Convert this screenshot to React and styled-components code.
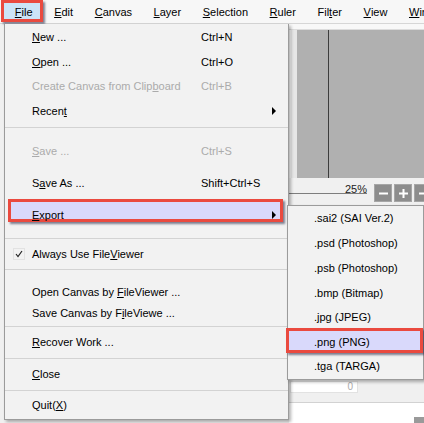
import React from "react";
import styled, { createGlobalStyle } from "styled-components";

// File menu of the paint app, with the Export submenu open

const GlobalStyle = createGlobalStyle`
  html, body { margin: 0; padding: 0; }
  body {
    background: #f0f0f0;
    font-family: "Liberation Sans", Arial, sans-serif;
    font-size: 11px;
    color: #000;
  }
`;

const Screen = styled.div`
  position: relative;
  width: 424px;
  height: 423px;
  overflow: hidden;
  background: #f0f0f0;
`;

const MenuBar = styled.div`
  display: flex;
  align-items: center;
  height: 23px;
  padding-left: 4px;
  background: #f7f7f7;
  border-bottom: 1px solid #d6d6d6;
`;

const BarItem = styled.div`
  position: relative;
  isolation: isolate;
  height: 100%;
  display: flex;
  align-items: center;
  padding: 0 10.8px;
  white-space: nowrap;
`;

const Mark = styled.span`
  position: absolute;
  z-index: -1;
  top: ${(p) => p.$top}px;
  bottom: ${(p) => p.$bottom}px;
  left: ${(p) => p.$left}px;
  right: ${(p) => p.$right}px;
  border: 3px solid #ea4a3f;
  background: ${(p) => p.$fill};
  box-shadow: 2px 2px 2px rgba(30, 30, 60, 0.55);
`;

const Key = styled.span`
  text-decoration: underline;
  text-underline-offset: 1px;
`;

const Workspace = styled.div`
  display: flex;
  height: 399px;
`;

const LeftDock = styled.div`
  flex: 0 0 289px;
  background: #f0f0f0;
`;

const RightPane = styled.div`
  flex: 1;
  min-width: 0;
  overflow: hidden;
  display: flex;
  flex-direction: column;
`;

const TopStrip = styled.div`
  height: 5px;
  background: #f8f8f8;
  border-bottom: 1px solid #dcdcdc;
`;

const CanvasArea = styled.div`
  display: flex;
  height: 148px;
`;

const CanvasEdge = styled.div`
  flex: 0 0 6px;
  background: #e6e6e6;
  border-left: 2px solid #fafafa;
`;

const CanvasGray = styled.div`
  flex: 1;
  background: #b0b0b0;
  padding-left: 31px;
`;

const Guide = styled.div`
  width: 1px;
  height: 100%;
  background: #3c3c3c;
`;

const ZoomBar = styled.div`
  display: flex;
  align-items: flex-start;
  height: 27px;
  background: #f0f0f0;
`;

const ZoomLabel = styled.div`
  flex: 0 0 78px;
  margin-top: 5px;
  height: 10px;
  line-height: 12px;
  text-align: right;
  font-size: 11px;
  color: #222;
  border-bottom: 1px solid #7d7d7d;
`;

const ZoomButtons = styled.div`
  display: flex;
  gap: 2px;
  margin: 6px 0 0 7px;
`;

const ZoomButton = styled.div`
  flex: 0 0 18px;
  height: 18px;
  box-sizing: border-box;
  display: flex;
  align-items: center;
  justify-content: center;
  background: #8d8d8d;
  border: 1px solid #a6a6a6;
`;

const Filler = styled.div`
  height: 175px;
  background: #f0f0f0;
`;

const FieldRow = styled.div`
  height: 23px;
  padding: 1px 0 0 1px;
  box-sizing: border-box;
  background: #f0f0f0;
  border-bottom: 1px solid #d2d2d2;
`;

const NumberField = styled.div`
  width: 68px;
  height: 12px;
  box-sizing: border-box;
  background: #fff;
  border: 1px solid #e2e2e2;
  color: #ababab;
  font-size: 10px;
  line-height: 10px;
  text-align: right;
  padding-right: 4px;
`;

const BottomArea = styled.div`
  flex: 1;
  display: flex;
  justify-content: flex-end;
  align-items: flex-end;
  background: #fff;
`;

const DropButton = styled.div`
  width: 10px;
  height: 6px;
  background: #9a9a9a;
`;

const Dropdown = styled.div`
  position: absolute;
  top: 24px;
  left: 4px;
  width: 285px;
  box-sizing: border-box;
  padding: 1px 0 2px;
  background: #f2f2f2;
  border: 1px solid #9b9b9b;
  border-top: none;
  box-shadow: 2px 2px 3px rgba(0, 0, 0, 0.3);
`;

const SubMenu = styled.div`
  position: absolute;
  top: 205px;
  left: 287px;
  width: 137px;
  height: 175px;
  box-sizing: border-box;
  background: #f2f2f2;
  border: 1px solid #9b9b9b;
  box-shadow: 2px 2px 3px rgba(0, 0, 0, 0.3);
`;

const Row = styled.div`
  position: relative;
  isolation: isolate;
  display: grid;
  grid-template-columns: 169px 1fr 8px;
  align-items: center;
  box-sizing: border-box;
  height: ${(p) => p.$h}px;
  padding: ${(p) => p.$shift || 0}px 8px 0 27px;
  color: ${(p) => (p.$disabled ? "#ababab" : "#000")};
  white-space: nowrap;
  line-height: 14px;
`;

const SubRow = styled.div`
  position: relative;
  isolation: isolate;
  display: flex;
  align-items: center;
  box-sizing: border-box;
  height: ${(p) => p.$h}px;
  padding: ${(p) => p.$shift || 0}px 0 0 26px;
  white-space: nowrap;
  line-height: 14px;
`;

const Check = styled.svg`
  position: absolute;
  left: 8px;
  top: 2px;
`;

const Separator = styled.div`
  height: 1px;
  margin: ${(p) => p.$before}px 0 ${(p) => p.$after}px;
  background: #d3d3d3;
`;

const menuBar = [
  ["File", 0],
  ["Edit", 0],
  ["Canvas", 0],
  ["Layer", 0],
  ["Selection", 0],
  ["Ruler", 0],
  ["Filter", 3],
  ["View", 0],
  ["Window", 0],
];

const fileMenu = [
  { label: "New ...", key: 0, shortcut: "Ctrl+N", h: 24 },
  { label: "Open ...", key: 0, shortcut: "Ctrl+O", h: 25 },
  { label: "Create Canvas from Clipboard", key: 23, shortcut: "Ctrl+B", h: 24, disabled: true },
  { label: "Recent", key: 5, sub: true, h: 25 },
  { sep: [4, 7] },
  { label: "Save ...", key: 0, shortcut: "Ctrl+S", h: 32, disabled: true },
  { label: "Save As ...", key: 1, shortcut: "Shift+Ctrl+S", h: 32 },
  { label: "Export", key: 0, sub: true, h: 23, shift: 8, marked: true },
  { sep: [16, 7] },
  { label: "Always Use FileViewer", key: 15, h: 16, checked: true },
  { sep: [7, 11] },
  { label: "Open Canvas by FileViewer ...", key: 15, h: 22 },
  { label: "Save Canvas by FileViewe ...", key: 16, h: 20 },
  { sep: [3, 3] },
  { label: "Recover Work ...", key: 0, h: 24 },
  { sep: [4, 3] },
  { label: "Close", key: 0, h: 24 },
  { sep: [4, 2] },
  { label: "Quit(X)", key: 5, h: 24 },
];

const exportMenu = [
  { label: ".sai2 (SAI Ver.2)", h: 24 },
  { label: ".psd (Photoshop)", h: 25 },
  { label: ".psb (Photoshop)", h: 25 },
  { label: ".bmp (Bitmap)", h: 25 },
  { label: ".jpg (JPEG)", h: 23 },
  { label: ".png (PNG)", h: 25, shift: 3, marked: true },
  { label: ".tga (TARGA)", h: 26 },
];

const withKey = (text, idx) => (
  <>
    {text.slice(0, idx)}
    <Key>{text[idx]}</Key>
    {text.slice(idx + 1)}
  </>
);

const Arrow = () => (
  <svg width="5" height="8" viewBox="0 0 5 8">
    <polygon points="0,0 4,4 0,8" fill="#000" />
  </svg>
);

const Minus = () => (
  <svg width="9" height="9" viewBox="0 0 9 9">
    <rect x="0" y="3.5" width="9" height="2" fill="#fff" />
  </svg>
);

const Plus = () => (
  <svg width="9" height="9" viewBox="0 0 9 9">
    <rect x="0" y="3.5" width="9" height="2" fill="#fff" />
    <rect x="3.5" y="0" width="2" height="9" fill="#fff" />
  </svg>
);

export default function App() {
  return (
    <Screen>
      <GlobalStyle />
      <MenuBar>
        {menuBar.map(([name, k], i) => (
          <BarItem key={name}>
            {i === 0 && <Mark $top={0} $bottom={1} $left={-3} $right={0} $fill="#cce4f7" />}
            {withKey(name, k)}
          </BarItem>
        ))}
      </MenuBar>

      <Workspace>
        <LeftDock />
        <RightPane>
          <TopStrip />
          <CanvasArea>
            <CanvasEdge />
            <CanvasGray>
              <Guide />
            </CanvasGray>
          </CanvasArea>
          <ZoomBar>
            <ZoomLabel>25%</ZoomLabel>
            <ZoomButtons>
              <ZoomButton>
                <Minus />
              </ZoomButton>
              <ZoomButton>
                <Plus />
              </ZoomButton>
              <ZoomButton>
                <Minus />
              </ZoomButton>
            </ZoomButtons>
          </ZoomBar>
          <Filler />
          <FieldRow>
            <NumberField>0</NumberField>
          </FieldRow>
          <BottomArea>
            <DropButton />
          </BottomArea>
        </RightPane>
      </Workspace>

      <Dropdown>
        {fileMenu.map((item, i) =>
          item.sep ? (
            <Separator key={i} $before={item.sep[0]} $after={item.sep[1]} />
          ) : (
            <Row key={i} $h={item.h} $shift={item.shift} $disabled={item.disabled}>
              {item.marked && <Mark $top={0} $bottom={0} $left={3} $right={5} $fill="#d9d9fb" />}
              {item.checked && (
                <Check width="12" height="12" viewBox="0 0 12 12">
                  <rect x="0.5" y="0.5" width="11" height="11" fill="none" stroke="#e2e2e2" />
                  <polyline points="3,6 5,8.5 9,3" fill="none" stroke="#222" strokeWidth="1.2" />
                </Check>
              )}
              <span>{withKey(item.label, item.key)}</span>
              <span>{item.shortcut}</span>
              <span>{item.sub && <Arrow />}</span>
            </Row>
          )
        )}
      </Dropdown>

      <SubMenu>
        {exportMenu.map((item) => (
          <SubRow key={item.label} $h={item.h} $shift={item.shift}>
            {item.marked && <Mark $top={0} $bottom={0} $left={-2} $right={0} $fill="#d9d9fb" />}
            {item.label}
          </SubRow>
        ))}
      </SubMenu>
    </Screen>
  );
}
